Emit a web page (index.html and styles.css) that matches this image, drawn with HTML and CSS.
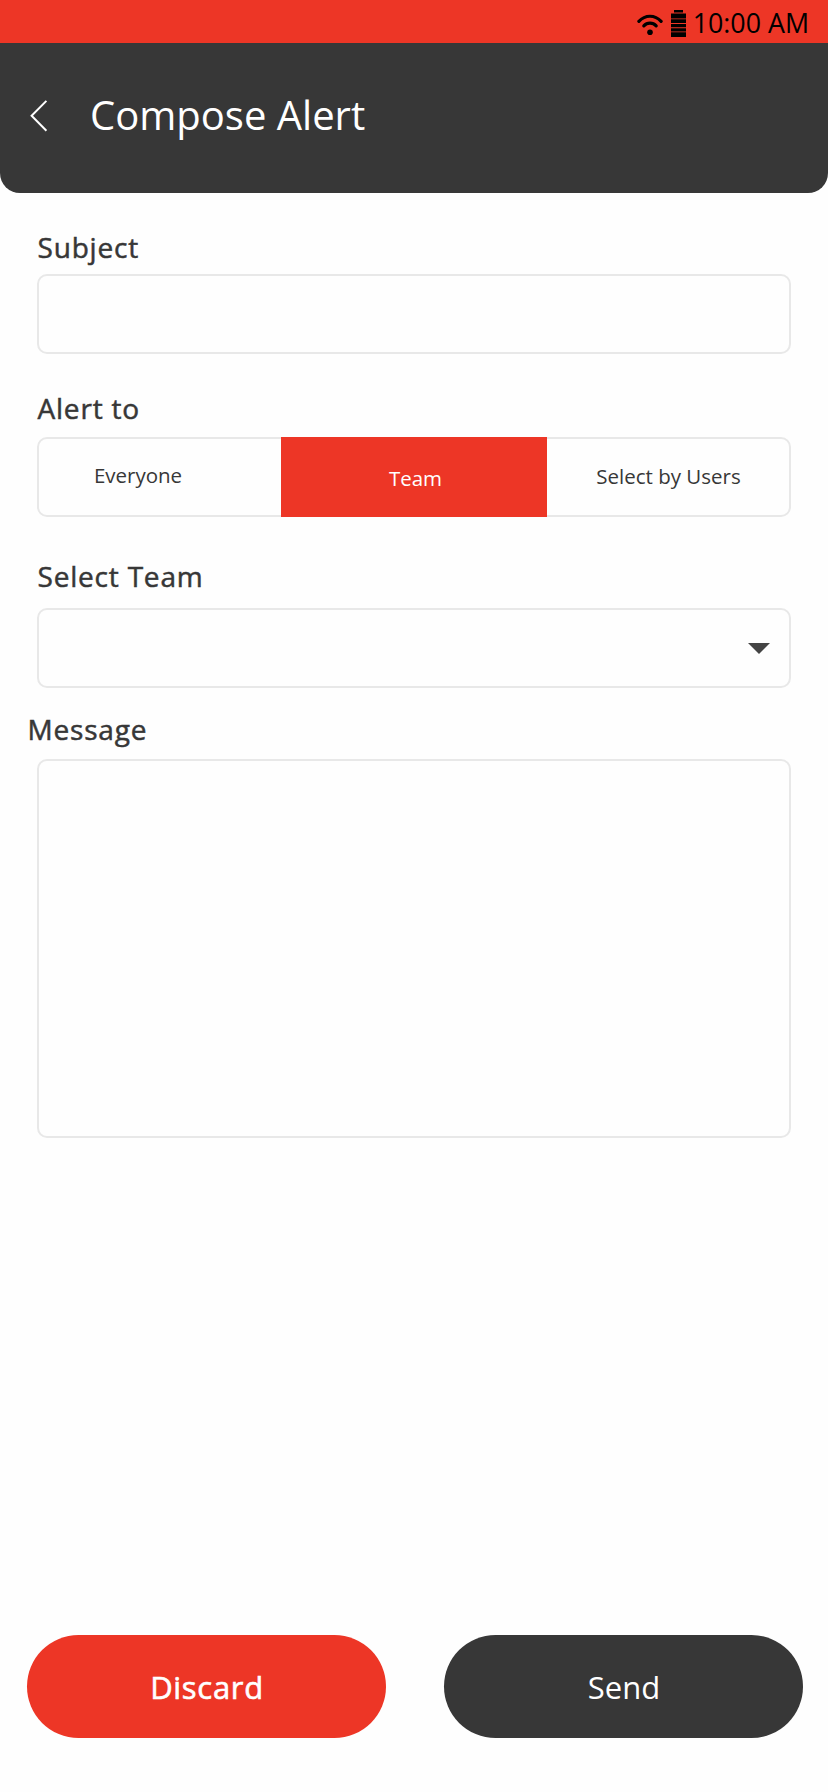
FILE: index.html
```html
<!DOCTYPE html>
<html lang="en">
<head>
<meta charset="utf-8">
<title>Compose Alert</title>
<link rel="stylesheet" href="styles.css">
</head>
<body>
<div class="screen">
  <div class="status">
    <svg class="wifi" width="26" height="22" viewBox="0 0 26 22" fill="none" stroke="#000" stroke-linecap="round">
      <path d="M1.9 7.4C8.2.5 17.8.5 24.1 7.4" stroke-width="3.2"/>
      <path d="M6.8 11.8C10.2 8.1 15.8 8.1 19.2 11.8" stroke-width="3.2"/>
      <circle cx="13" cy="18.2" r="2.8" fill="#000" stroke="none"/>
    </svg>
    <svg class="battery" width="15" height="27" viewBox="0 0 15 27">
      <path d="M3 0h9v2.6H3zM0 3.6h15v4.8H0zM0 9.3h15v3.7H0zM0 14h15v3.3H0zM0 18.2h15v3.3H0zM0 22.3h15V27H0z"/>
    </svg>
    <span class="time">10:00 AM</span>
  </div>
  <header class="header">
    <svg class="back" width="18" height="32" viewBox="0 0 18 32" fill="none" stroke="#fff" stroke-width="2">
      <path d="M16.4.9 1.6 15.8l14.8 14.9"/>
    </svg>
    <h1 class="title">Compose Alert</h1>
  </header>
  <main class="form">
    <label class="label subject-label" for="subject">Subject</label>
    <input class="box" id="subject" type="text">
    <div class="label alert-label">Alert to</div>
    <div class="box segments">
      <button class="segment everyone">Everyone</button>
      <button class="segment team">Team</button>
      <button class="segment users">Select by Users</button>
    </div>
    <div class="label select-label">Select Team</div>
    <div class="box select">
      <svg width="22" height="11" viewBox="0 0 22 11"><path d="M0 0h22L11 11z" fill="#444"/></svg>
    </div>
    <label class="label message-label" for="message">Message</label>
    <textarea class="box message" id="message"></textarea>
  </main>
  <footer class="actions">
    <button class="action discard">Discard</button>
    <button class="action send">Send</button>
  </footer>
</div>
</body>
</html>
```
FILE: styles.css
```css
* { box-sizing: border-box; }
body { margin: 0; background: #fefefe; font-family: "Open Sans", "Noto Sans", sans-serif; color: #373737; }
button { font: inherit; border: 0; margin: 0; padding: 0; background: none; color: inherit; white-space: nowrap; }
.screen { width: 828px; height: 1792px; display: flex; flex-direction: column; background: #fefefe; }
.status { height: 43px; flex: none; padding: 10px 19px 0 0; display: flex; justify-content: flex-end; align-items: flex-start; background: #ed3626; color: #000; }
.wifi { margin: 4px 8px 0 0; }
.battery { margin-right: 7px; }
.time { margin-top: 1px; font-size: 26.8px; line-height: 24px; }
.header { height: 150px; flex: none; padding: 0 30px; display: flex; align-items: flex-start; background: #373737; border-radius: 0 0 20px 20px; }
.back { margin-top: 57px; }
.title { margin: 46px 0 0 42px; font-size: 40px; line-height: 52px; font-weight: 400; color: #fff; }
.form { padding: 36px 37px 0; display: flex; flex-direction: column; }
.label { padding-left: 0.5px; font-size: 28px; line-height: 36px; letter-spacing: 0.8px; -webkit-text-stroke: 0.5px currentColor; }
.subject-label { margin-bottom: 9px; }
.alert-label { margin: 36px 0 11px; }
.select-label { margin: 41px 0 14px; }
.message-label { margin: 23px 0 12px -10px; }
.box { display: block; width: 754px; height: 80px; border: 2px solid #e8e8e8; border-radius: 10px; background: #fefefe; outline: 0; font: inherit; }
.segments { display: grid; grid-template-columns: 242px 266px 242px; }
.segment { font-size: 20.5px; line-height: 28px; }
.everyone { padding: 0 44px 6px 0; }
.team { height: 80px; margin-top: -2px; padding: 1px 0 0 3px; background: #ed3626; color: #fff; }
.users { padding: 0 0 4px 1px; }
.select { display: flex; justify-content: flex-end; padding: 33px 19px 0 0; }
.message { height: 379px; resize: none; }
.actions { margin-top: auto; padding: 0 25px 54px 27px; display: flex; justify-content: space-between; }
.action { width: 359px; height: 103px; border-radius: 52px; padding: 1px 0 0 1px; font-size: 31px; color: #fff; }
.discard { background: #ed3626; letter-spacing: 0.7px; -webkit-text-stroke: 0.6px currentColor; }
.send { background: #373737; }
```
